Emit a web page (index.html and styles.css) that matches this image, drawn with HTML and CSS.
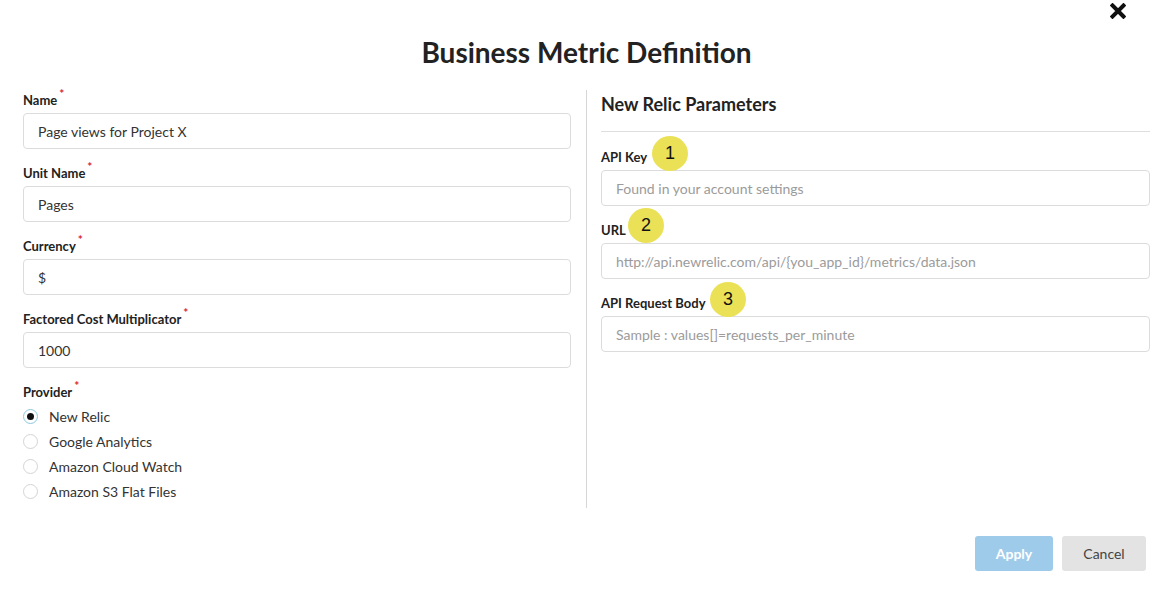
FILE: index.html
```html
<!DOCTYPE html>
<html>
<head>
	<title>Business Metric Definition</title>
	<meta charset="utf-8">
	<link rel="stylesheet" href="styles.css">
</head>
<body>
	<div class="modal">
		<!-- close -->
		<a href="#" class="modal-close">
			<svg width="16" height="16" viewBox="0 0 16 16"><path d="M2.5 2.5 L13.5 13.5 M13.5 2.5 L2.5 13.5" stroke="#111" stroke-width="4" stroke-linecap="square" fill="none"/></svg>
		</a>
		<h1 class="modal-title">Business Metric Definition</h1>

		<div class="modal-body">
			<!-- left: metric fields -->
			<div class="col col-left">
				<div class="field">
					<label class="field-label">Name<i class="req">*</i></label>
					<input class="field-input" type="text" value="Page views for Project X">
				</div>
				<div class="field">
					<label class="field-label">Unit Name<i class="req">*</i></label>
					<input class="field-input" type="text" value="Pages">
				</div>
				<div class="field">
					<label class="field-label">Currency<i class="req">*</i></label>
					<input class="field-input" type="text" value="$">
				</div>
				<div class="field">
					<label class="field-label">Factored Cost Multiplicator<i class="req">*</i></label>
					<input class="field-input" type="text" value="1000">
				</div>
				<div class="field field-last">
					<label class="field-label">Provider<i class="req">*</i></label>
					<ul class="radio-list">
						<li class="radio-item checked"><span class="radio-dot"></span>New Relic</li>
						<li class="radio-item"><span class="radio-dot"></span>Google Analytics</li>
						<li class="radio-item"><span class="radio-dot"></span>Amazon Cloud Watch</li>
						<li class="radio-item"><span class="radio-dot"></span>Amazon S3 Flat Files</li>
					</ul>
				</div>
			</div>

			<div class="col-divider"></div>

			<!-- right: provider params -->
			<div class="col col-right">
				<h2 class="params-title">New Relic Parameters</h2>
				<div class="field">
					<label class="field-label">API Key<span class="badge badge-1">1</span></label>
					<input class="field-input" type="text" placeholder="Found in your account settings">
				</div>
				<div class="field">
					<label class="field-label">URL<span class="badge badge-2">2</span></label>
					<input class="field-input" type="text" placeholder="http://api.newrelic.com/api/{you_app_id}/metrics/data.json">
				</div>
				<div class="field">
					<label class="field-label">API Request Body<span class="badge badge-3">3</span></label>
					<input class="field-input" type="text" placeholder="Sample : values[]=requests_per_minute">
				</div>
			</div>
		</div>

		<div class="modal-footer">
			<button class="btn btn-apply">Apply</button>
			<button class="btn btn-cancel">Cancel</button>
		</div>
	</div>
</body>
</html>
```

FILE: styles.css
```css
body {
	margin: 0;
	font-family: Lato, "Open Sans", "Liberation Sans", sans-serif;
	font-size: 14px;
	color: #333;
	background: #fff;
}
i {
	font-style: normal;
}
.modal {
	position: relative;
	padding: 35px 13px 0 23px;
}
.modal-close {
	position: absolute;
	top: 3px;
	right: 37px;
	display: block;
	width: 16px;
	height: 16px;
}
.modal-close svg {
	display: block;
}
.modal-title {
	margin: 0;
	text-align: center;
	font-size: 28px;
	line-height: 34px;
	font-weight: 700;
	color: #222;
}
.modal-body {
	display: flex;
	margin-top: 21px;
}
.col-left {
	width: 548px;
	padding: 2px 0 3px;
}
.col-divider {
	width: 1px;
	background: #d6d6d6;
	margin: 0 14px 0 15px;
}
.col-right {
	flex: 1;
	padding-top: 2px;
}
.field {
	margin-bottom: 16px;
}
.field-last {
	margin-bottom: 0;
}
.field-label {
	display: block;
	position: relative;
	height: 16px;
	font-size: 13px;
	line-height: 16px;
	font-weight: 700;
	color: #222;
	margin-bottom: 5px;
}
.req {
	color: #d9262b;
	font-size: 12px;
	line-height: 0;
	vertical-align: top;
	position: relative;
	top: 2px;
	margin-left: 2px;
}
.field-input {
	display: block;
	box-sizing: border-box;
	width: 100%;
	height: 36px;
	border: 1px solid #dcdcdc;
	border-radius: 4px;
	padding: 0 14px;
	font-family: Lato, "Open Sans", "Liberation Sans", sans-serif;
	font-size: 14px;
	color: #333;
	outline: 0;
}
.field-input::placeholder {
	color: #9b9b9b;
}
/* radios */
.radio-list {
	list-style: none;
	margin: -1px 0 1px;
	padding: 0;
}
.radio-item {
	display: flex;
	align-items: center;
	height: 25px;
	font-size: 14px;
	color: #333;
}
.radio-dot {
	box-sizing: border-box;
	width: 15px;
	height: 15px;
	border: 1px solid #d4d4d4;
	border-radius: 50%;
	margin-right: 11px;
	position: relative;
}
.radio-item.checked .radio-dot {
	border-color: #8cc8e0;
}
.radio-item.checked .radio-dot::after {
	content: '';
	position: absolute;
	left: 3px;
	top: 3px;
	width: 7px;
	height: 7px;
	border-radius: 50%;
	background: #111;
}
/* right side */
.params-title {
	margin: 0;
	padding-top: 1px;
	font-size: 18px;
	line-height: 22px;
	font-weight: 700;
	color: #222;
	padding-bottom: 16px;
	border-bottom: 1px solid #dedede;
	margin-bottom: 17px;
}
/* numbered callouts drawn over the labels */
.badge {
	position: absolute;
	width: 36px;
	height: 35px;
	border-radius: 50%;
	background: #ebe157;
	font-family: "Liberation Sans", Arial, sans-serif;
	font-weight: 400;
	font-size: 18px;
	line-height: 35px;
	text-align: center;
	color: #111;
}
.badge-1 {
	left: 51px;
	top: -13px;
}
.badge-2 {
	left: 27px;
	top: -14px;
}
.badge-3 {
	left: 109px;
	top: -13px;
}
/* footer */
.modal-footer {
	display: flex;
	justify-content: flex-end;
	gap: 9px;
	margin-top: 28px;
	padding-right: 4px;
}
.btn {
	height: 35px;
	border: none;
	border-radius: 3px;
	font-family: Lato, "Open Sans", "Liberation Sans", sans-serif;
	font-size: 14px;
	padding: 0;
}
.btn-apply {
	width: 78px;
	background: #9fcbea;
	color: #fff;
	font-weight: 700;
}
.btn-cancel {
	width: 84px;
	background: #e3e3e3;
	color: #444;
}
```
